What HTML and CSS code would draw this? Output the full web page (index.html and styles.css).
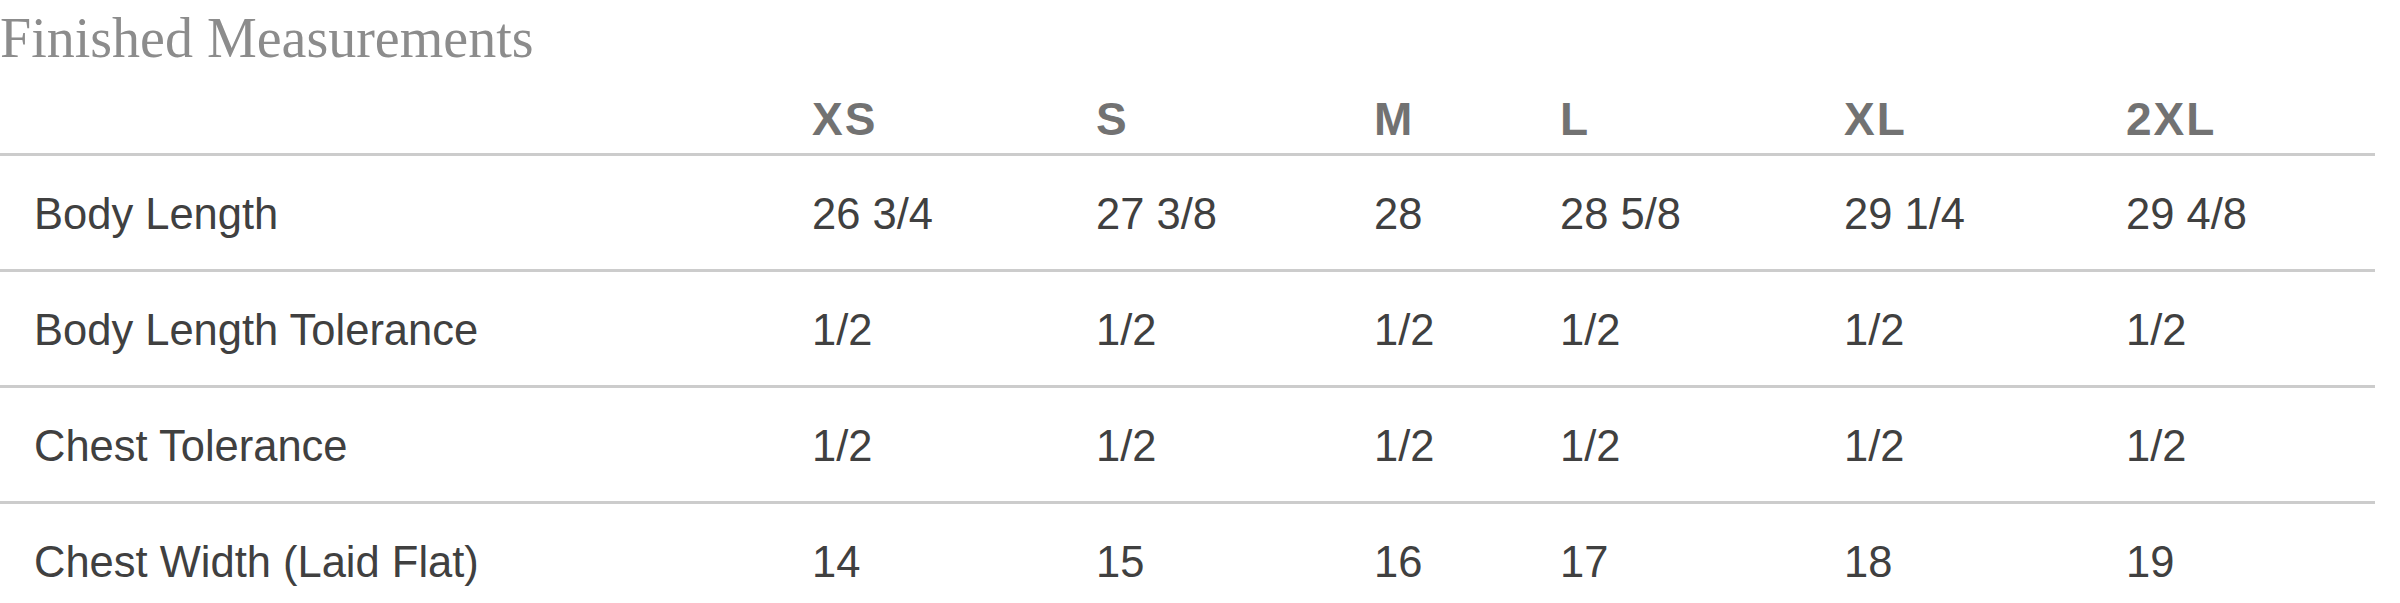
FILE: index.html
```html
<!DOCTYPE html>
<html lang="en">
<head>
<meta charset="utf-8">
<title>Finished Measurements</title>
<link rel="stylesheet" href="styles.css">
</head>
<body>
<div class="sizechart">
  <div class="title">Finished Measurements</div>
  <table class="measure">
    <colgroup>
      <col class="c-label">
      <col class="c-xs">
      <col class="c-s">
      <col class="c-m">
      <col class="c-l">
      <col class="c-xl">
      <col class="c-2xl">
    </colgroup>
    <thead>
      <tr>
        <th></th><th>XS</th><th>S</th><th>M</th><th>L</th><th>XL</th><th>2XL</th>
      </tr>
    </thead>
    <tbody>
      <tr>
        <td>Body Length</td><td>26 3/4</td><td>27 3/8</td><td>28</td><td>28 5/8</td><td>29 1/4</td><td>29 4/8</td>
      </tr>
      <tr>
        <td>Body Length Tolerance</td><td>1/2</td><td>1/2</td><td>1/2</td><td>1/2</td><td>1/2</td><td>1/2</td>
      </tr>
      <tr>
        <td>Chest Tolerance</td><td>1/2</td><td>1/2</td><td>1/2</td><td>1/2</td><td>1/2</td><td>1/2</td>
      </tr>
      <tr>
        <td>Chest Width (Laid Flat)</td><td>14</td><td>15</td><td>16</td><td>17</td><td>18</td><td>19</td>
      </tr>
    </tbody>
  </table>
</div>
</body>
</html>
```

FILE: styles.css
```css
html, body {
  margin: 0;
  padding: 0;
  background: #ffffff;
}

.sizechart {
  width: 2375px;
}

.title {
  font-family: "Liberation Serif", "Times New Roman", serif;
  font-size: 56px;
  line-height: 56px;
  color: #8c8c8c;
  margin-top: 10px;
}

.measure {
  width: 2375px;
  table-layout: fixed;
  border-collapse: collapse;
  font-family: "Liberation Sans", Arial, sans-serif;
}

.c-label { width: 778px; }
.c-xs { width: 284px; }
.c-s { width: 278px; }
.c-m { width: 186px; }
.c-l { width: 284px; }
.c-xl { width: 282px; }
.c-2xl { width: 283px; }

.measure th {
  text-align: left;
  font-size: 46px;
  line-height: 50px;
  font-weight: bold;
  color: #727272;
  letter-spacing: 2px;
  padding: 28px 0 9px 34px;
  border-bottom: 3px solid #cccccc;
}

.measure td {
  text-align: left;
  font-size: 43.5px;
  line-height: 50px;
  color: #404040;
  padding: 33px 0 30px 34px;
  border-bottom: 3px solid #cccccc;
  white-space: nowrap;
}
```
